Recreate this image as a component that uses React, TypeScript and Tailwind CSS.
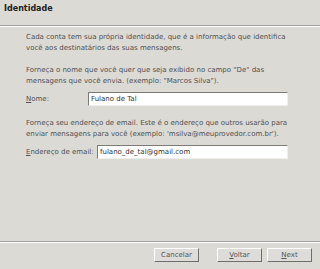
export default function App() {
  const font = { fontFamily: '"DejaVu Sans", Verdana, sans-serif' };
  return (
    <div className="flex h-[269px] w-[320px] flex-col bg-[#dcdad5] text-[#505050]" style={font}>
      <div className="h-[26px] border-b border-[#9f9e9a] pl-[4px] pt-[3px] text-[8px] font-bold text-[#222]">
        Identidade
      </div>
      <div className="h-px bg-white" />

      <div className="flex flex-col px-[26px] pt-[5px] text-[7px] leading-[11px]">
        <p>
          Cada conta tem sua própria identidade, que é a informação que identifica
          <br />
          você aos destinatários das suas mensagens.
        </p>

        <p className="mt-[11px]">
          Forneça o nome que você quer que seja exibido no campo "De" das
          <br />
          mensagens que você envia. (exemplo: "Marcos Silva").
        </p>
        <div className="mt-[5px] flex items-center">
          <label className="w-[62px]">
            <span className="underline">N</span>ome:
          </label>
          <div className="flex h-[14px] w-[200px] items-center border border-t-[#7c7b77] border-l-[#7c7b77] border-r-[#efeeec] border-b-[#efeeec] bg-white pl-[2px] text-[#333]">
            Fulano de Tal
          </div>
        </div>

        <p className="mt-[12px]">
          Forneça seu endereço de email. Este é o endereço que outros usarão para
          <br />
          enviar mensagens para você (exemplo: 'msilva@meuprovedor.com.br').
        </p>
        <div className="mt-[5px] flex items-center">
          <label className="w-[71px]">
            <span className="underline">E</span>ndereço de email:
          </label>
          <div className="flex h-[14px] w-[191px] items-center border border-t-[#7c7b77] border-l-[#7c7b77] border-r-[#efeeec] border-b-[#efeeec] bg-white pl-[2px] text-[#333]">
            fulano_de_tal@gmail.com
          </div>
        </div>
      </div>

      <div className="flex-1" />

      <div className="h-px bg-[#9f9e9a]" />
      <div className="h-px bg-white" />
      <div className="flex items-start pt-[5px] pb-[7px] text-[7px]">
        <button className="ml-[154px] h-[14px] w-[45px] border border-t-white border-l-white border-r-[#6f6e6a] border-b-[#6f6e6a] bg-[#dedcd8] text-[#555]">
          Cancelar
        </button>
        <button className="ml-[18px] h-[14px] w-[45px] border border-t-white border-l-white border-r-[#6f6e6a] border-b-[#6f6e6a] bg-[#dedcd8] text-[#555]">
          <span className="underline">V</span>oltar
        </button>
        <button className="ml-[5px] h-[14px] w-[45px] border border-t-white border-l-white border-r-[#6f6e6a] border-b-[#6f6e6a] bg-[#dedcd8] text-[#555]">
          <span className="underline">N</span>ext
        </button>
      </div>
    </div>
  );
}
